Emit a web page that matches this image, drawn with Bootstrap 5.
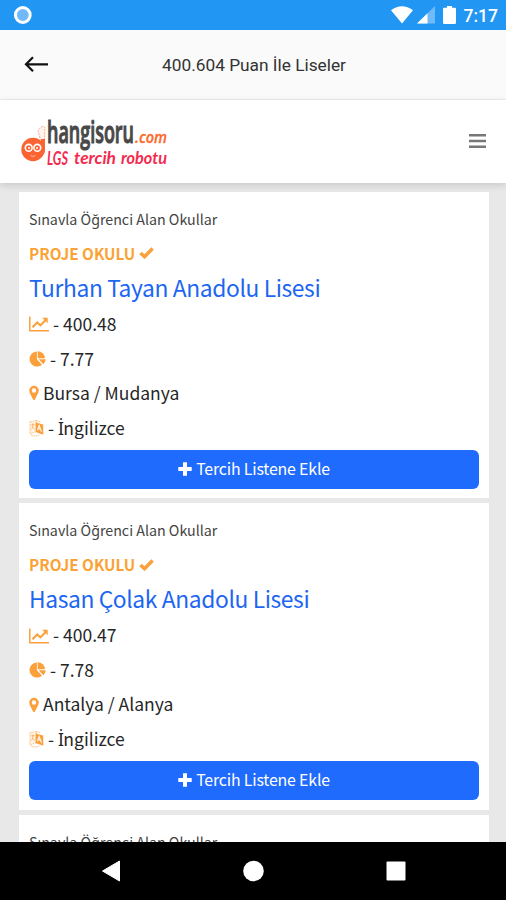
<!DOCTYPE html>
<html lang="tr">
<head>
<meta charset="utf-8">
<meta name="viewport" content="width=device-width, initial-scale=1">
<title>400.604 Puan İle Liseler</title>
<link href="https://cdn.jsdelivr.net/npm/bootstrap@5.3.0/dist/css/bootstrap.min.css" rel="stylesheet">
<style>
body{height:900px;overflow:hidden;background:#e8e8e8;font-family:"Noto Sans CJK JP","Noto Sans",sans-serif;color:#262626}
svg{display:block;flex:none}
.status-bar{height:30px;background:#2196f3;color:#fff;font:500 17.5px/30px Roboto,sans-serif}
.app-bar{height:70px;background:#fafafa;border-bottom:1px solid #eee;font:400 17.3px/70px Roboto,sans-serif;color:#333}
.site-head{height:83px;background:#fff;box-shadow:0 2px 7px rgba(0,0,0,.14);position:relative}
.list-area{padding:9px 17px 0 19px;height:659px;overflow:hidden}
.school{height:306.2px;margin-bottom:5.3px;background:#fff;padding:10px 10px 0;white-space:nowrap}
.kind{font-size:14.25px;line-height:34.6px;height:34.5px;color:#444}
.project{font-size:15.3px;font-weight:700;line-height:33.4px;height:33.5px;color:#fba234}
.title{font-size:22.8px;letter-spacing:-.38px;font-weight:400;line-height:35.4px;height:37px;color:#1c66f2;margin:0}
.fact{font-size:17.5px;line-height:34.5px;height:34.5px}
.fact svg,.project svg{color:#fba03a}
.dotted-cap{font-family:"Noto Sans",sans-serif;font-size:17.5px;letter-spacing:-.6px;line-height:1}
.add{height:38.5px;margin-top:5px;background:#1f6bfd;border:0;border-radius:6px;font-size:15.9px;letter-spacing:-.17px;line-height:36px;padding:0 0 1px}
.sys-nav{height:58px;background:#000}
</style>
<script src="https://cdn.jsdelivr.net/npm/bootstrap@5.3.0/dist/js/bootstrap.bundle.min.js"></script>
</head>
<body class="d-flex flex-column">
<svg width="0" height="0" class="position-absolute" aria-hidden="true">
<symbol id="check" viewBox="0 0 15 12"><path d="M1.5 6 L5.5 9.7 L13.6 1.6" fill="none" stroke="currentColor" stroke-width="3.5"/></symbol>
<symbol id="chart" viewBox="0 0 20 16"><path d="M.8 .5V14.7H20" fill="none" stroke="currentColor" stroke-width="1.5"/><path d="M3.5 11.3 8.3 6.5 11.4 9.4 16.5 4.2" fill="none" stroke="currentColor" stroke-width="2.1"/><path d="M13.2 1.8H18.7V7.3Z" fill="currentColor"/></symbol>
<symbol id="pie" viewBox="0 0 17 16"><path d="M7.9 .6V8.3L13 13.7A7.5 7.5 0 1 1 7.9 .6Z" fill="currentColor"/><path d="M8.7 .2A7.3 7.3 0 0 1 15.9 7.3H8.7Z" fill="currentColor"/><path d="M9.7 8.3H16.7A7.6 7.6 0 0 1 14.4 13.2Z" fill="currentColor"/></symbol>
<symbol id="pin" viewBox="0 0 10 16"><path fill-rule="evenodd" d="M5 .8A4.8 4.8 0 0 1 9.8 5.6C9.8 8.1 7.5 11 6 14.5Q5 16 4 14.5C2.5 11 .2 8.1 .2 5.6A4.8 4.8 0 0 1 5 .8ZM5 3.3A2.2 2.2 0 1 0 5 7.7A2.2 2.2 0 1 0 5 3.3Z" fill="currentColor"/></symbol>
<symbol id="lang" viewBox="0 0 16 18"><path d="M1 2.5 8 .9V12.8L1 15.3ZM8 1.3 12 2.2M2 16.5Q7 18.5 11 16.5" fill="#fff5e8" stroke="#fbbd77" stroke-width=".9" stroke-dasharray="2 .7"/><path d="M2.5 5.5H6M4.2 4V6Q4 9 2.5 10.5M3 7.5 6.3 10.5" stroke="#fba85a" stroke-width=".9" fill="none"/><path d="M7 3.2 15.2 5.2V16.3L7 13.2Z" fill="currentColor"/><path d="M9 11.2 10.8 6.3 13.3 12.8M9.6 9.6 12.2 10.3" fill="none" stroke="#fff" stroke-width="1.1"/></symbol>
<symbol id="plus" viewBox="0 0 14 14"><path d="M7 .3V13.7M.3 7H13.7" stroke="currentColor" stroke-width="4" fill="none"/></symbol>
</svg>

<div class="status-bar d-flex align-items-center flex-shrink-0 px-2">
<svg class="ms-1 me-auto" width="22" height="20" viewBox="0 0 22 20"><circle cx="10.8" cy="10" r="7.4" fill="#71b9f8" stroke="#fff" stroke-width="3"/></svg>
<svg width="22" height="18" viewBox="0 0 22 18"><path d="M0 4.2Q11-3.7 22 4.2L11 17.5Z" fill="#fff"/></svg>
<svg class="ms-1" width="18" height="18" viewBox="0 0 18 18"><path d="M0 17.5 18 0V17.5Z" fill="#70baf8"/><path d="M0 17.5 10.5 7.3V17.5Z" fill="#fff"/></svg>
<svg class="ms-2" width="13" height="18" viewBox="0 0 13 18"><path d="M1.3 1.8H4V0H9V1.8H11.7Q13 1.8 13 3V16.5Q13 18 11.7 18H1.3Q0 18 0 16.5V3Q0 1.8 1.3 1.8Z" fill="#fff"/></svg>
<span class="ms-2 pt-1 lh-1">7:17</span>
</div>

<div class="app-bar d-flex align-items-center flex-shrink-0">
<svg class="ms-4" width="26" height="20" viewBox="0 0 26 20"><path d="M24 9.3H2M9 2.3 2 9.3 9 16.3" fill="none" stroke="#111" stroke-width="2.2"/></svg>
<span class="flex-grow-1 text-center pe-5">400.604 Puan İle Liseler</span>
</div>

<header class="site-head d-flex align-items-center justify-content-between flex-shrink-0">
<svg width="180" height="83" viewBox="0 0 180 83" role="img" aria-label="hangisoru.com">
<path d="M40 38 38 31Q42 24 45 28L44 49Q43 54 41 48Z" fill="#fff3ee" stroke="#f8aa88" stroke-width="1" stroke-dasharray="2 1"/><path d="M41 39H45V49Q45 56 40 55Z" fill="#fb6333"/>
<circle cx="33" cy="49.5" r="11.7" fill="#fb6333"/><g fill="#fb6333" stroke="#fff" stroke-width="1.6"><circle cx="28.7" cy="47.8" r="3.4"/><circle cx="37.3" cy="47.8" r="3.4"/></g><circle cx="29" cy="48" r="1" fill="#fff"/><circle cx="37" cy="48" r="1" fill="#fff"/><path d="M30.5 55.5Q33 57.5 35.5 55.5" stroke="#fdb79d" fill="none"/>
<text transform="translate(47 43) scale(1 1.36)" font-family="Open Sans,sans-serif" font-weight="600" font-size="22.5" fill="#484848" stroke="#484848" stroke-width=".8" textLength="87" lengthAdjust="spacingAndGlyphs">hangisoru</text>
<text x="135" y="43" font-family="Open Sans,sans-serif" font-weight="600" font-style="italic" font-size="16.5" fill="#fb6a2e" stroke="#fb6a2e" stroke-width=".3" textLength="32" lengthAdjust="spacingAndGlyphs">.com</text>
<g font-family="Lato,sans-serif" font-weight="700" font-style="italic" fill="#f42b50" font-size="17">
<text x="47" y="65" font-size="19" textLength="21" lengthAdjust="spacingAndGlyphs">LGS</text>
<text x="74" y="63.5" textLength="42" lengthAdjust="spacingAndGlyphs">tercih</text>
<text x="121" y="63.5" textLength="46" lengthAdjust="spacingAndGlyphs">robotu</text></g>
</svg>
<svg class="me-3" width="22" height="20" viewBox="0 0 22 20"><path d="M1 3.2H18M1 9H18M1 14.8H18" stroke="#777" stroke-width="2.6"/></svg>
</header>

<main class="list-area flex-shrink-0">
<article class="school">
<div class="kind">Sınavla Öğrenci Alan Okullar</div>
<div class="project d-flex align-items-center"><span>PROJE OKULU</span><svg class="ms-1" width="15" height="12"><use href="#check"/></svg></div>
<h2 class="title">Turhan Tayan Anadolu Lisesi</h2>
<div class="fact d-flex align-items-center"><svg class="me-1" width="20" height="16"><use href="#chart"/></svg><span>- 400.48</span></div>
<div class="fact d-flex align-items-center"><svg class="me-1" width="17" height="16"><use href="#pie"/></svg><span>- 7.77</span></div>
<div class="fact d-flex align-items-center"><svg class="me-1" width="10" height="16"><use href="#pin"/></svg><span>Bursa / Mudanya</span></div>
<div class="fact d-flex align-items-center"><svg class="me-1" width="15" height="18"><use href="#lang"/></svg><span>- <span class="dotted-cap">İ</span>ngilizce</span></div>
<button class="add btn btn-primary w-100 d-flex align-items-center justify-content-center"><svg class="me-1" width="14" height="14"><use href="#plus"/></svg><span>Tercih Listene Ekle</span></button>
</article>
<article class="school">
<div class="kind">Sınavla Öğrenci Alan Okullar</div>
<div class="project d-flex align-items-center"><span>PROJE OKULU</span><svg class="ms-1" width="15" height="12"><use href="#check"/></svg></div>
<h2 class="title">Hasan Çolak Anadolu Lisesi</h2>
<div class="fact d-flex align-items-center"><svg class="me-1" width="20" height="16"><use href="#chart"/></svg><span>- 400.47</span></div>
<div class="fact d-flex align-items-center"><svg class="me-1" width="17" height="16"><use href="#pie"/></svg><span>- 7.78</span></div>
<div class="fact d-flex align-items-center"><svg class="me-1" width="10" height="16"><use href="#pin"/></svg><span>Antalya / Alanya</span></div>
<div class="fact d-flex align-items-center"><svg class="me-1" width="15" height="18"><use href="#lang"/></svg><span>- <span class="dotted-cap">İ</span>ngilizce</span></div>
<button class="add btn btn-primary w-100 d-flex align-items-center justify-content-center"><svg class="me-1" width="14" height="14"><use href="#plus"/></svg><span>Tercih Listene Ekle</span></button>
</article>
<article class="school"><div class="kind">Sınavla Öğrenci Alan Okullar</div></article>
</main>

<nav class="sys-nav flex-shrink-0">
<svg width="506" height="58" viewBox="0 0 506 58"><path d="M102.5 29 119.5 19V39Z" fill="#fff" stroke="#fff" stroke-linejoin="round"/><circle cx="253.5" cy="29" r="10.3" fill="#fff"/><rect x="386.5" y="19.5" width="19" height="19" rx="1" fill="#fff"/></svg>
</nav>
</body>
</html>
